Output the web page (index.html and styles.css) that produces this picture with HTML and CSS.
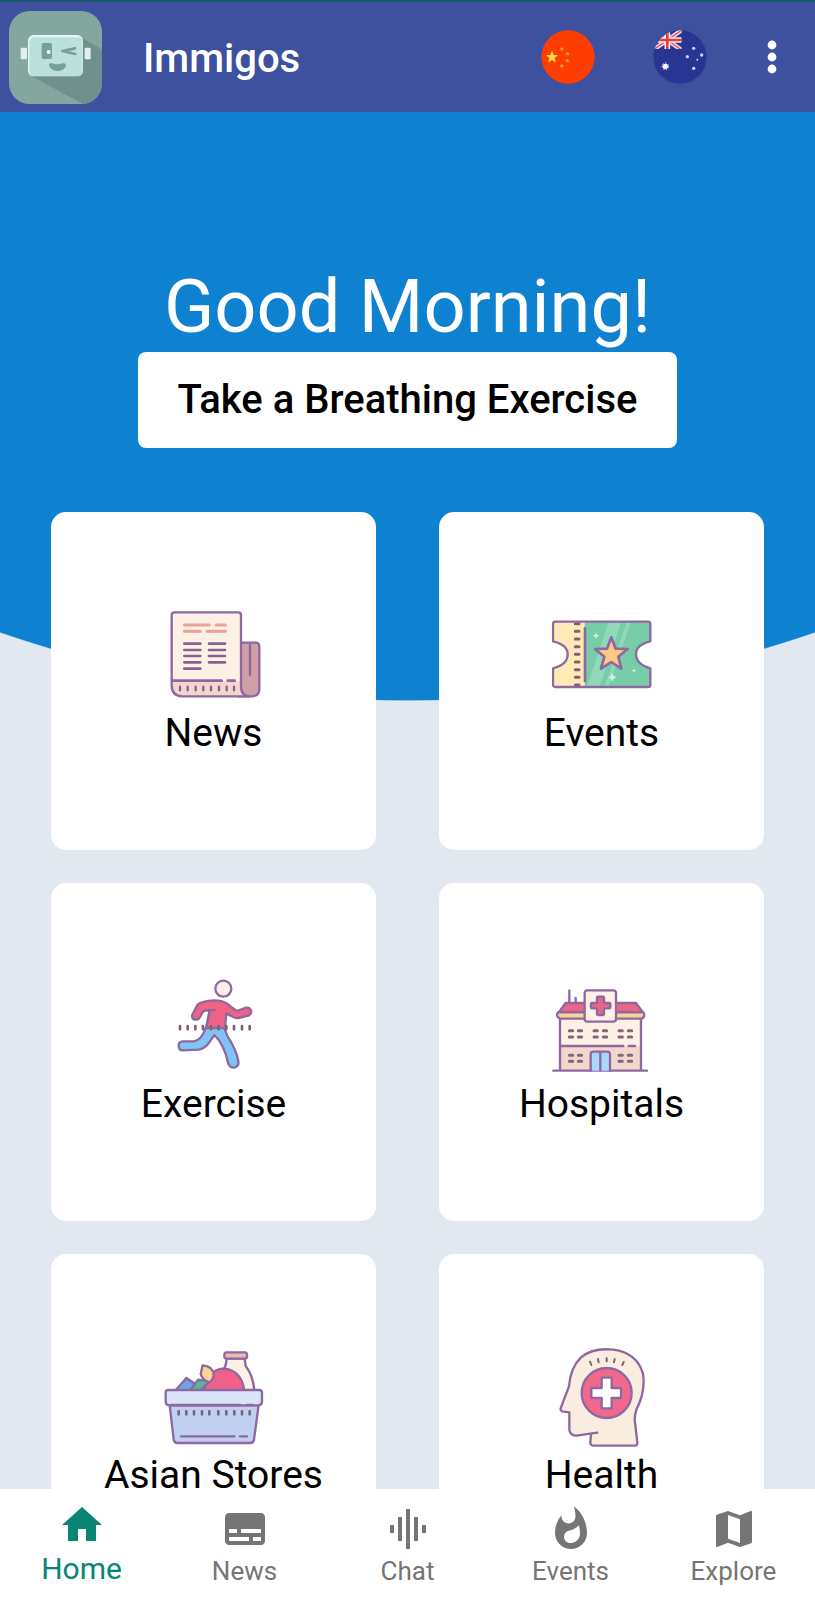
FILE: index.html
```html
<!DOCTYPE html>
<html lang="en">
<head>
<meta charset="utf-8">
<meta name="viewport" content="width=device-width, initial-scale=1">
<title>Immigos</title>
<link rel="stylesheet" href="styles.css">
</head>
<body>
<div class="app">
  <header class="topbar">
    <svg class="logo" viewBox="27 33 279 279" aria-hidden="true">
      <defs><clipPath id="logo-clip"><rect x="27" y="33" width="279" height="279" rx="62"/></clipPath></defs>
      <g clip-path="url(#logo-clip)">
        <rect x="27" y="33" width="279" height="279" fill="#83a69f"/>
        <path d="M246 113l60 36v163h-58L88 224z" fill="#70908d"/>
      </g>
      <rect x="62" y="143" width="19" height="35" rx="3" fill="#e0f1ef"/>
      <rect x="254" y="143" width="18" height="35" rx="3" fill="#e0f1ef"/>
      <rect x="84" y="105" width="165" height="124" rx="17" fill="#e2f8f4"/>
      <rect x="88" y="112" width="160" height="116" rx="14" fill="#bce0dc"/>
      <rect x="125" y="129" width="31" height="48" rx="5" fill="#75a09c"/>
      <circle cx="146" cy="156" r="6" fill="#e8fbf8"/>
      <path d="M225 145L187 153L226 162" fill="none" stroke="#75a09c" stroke-width="8" stroke-linejoin="round" stroke-linecap="round"/>
      <path d="M147 193q1-5 9-3q16 6 32 0q9-2 10 5q-1 17-25 18q-25-1-26-20z" fill="#75a09c"/>
    </svg>
    <h1 class="brand">Immigos</h1>
    <button class="flag" type="button" aria-label="Chinese">
      <svg viewBox="64 89 162 162" aria-hidden="true">
        <circle cx="145" cy="170" r="80" fill="#fe3d00"/>
        <path d="M97 150l5 14h14l-11 9 4 14-12-8-12 8 4-14-11-9h14z" fill="#ffd83a"/>
        <g fill="#ff9a1c"><path d="M127 139l2 4 5 1-4 3 1 5-4-3-5 3 1-5-3-4 5-1z"/><path d="M144 154l2 4 5 1-4 3 1 5-5-3-4 3 1-5-4-4 5-1z"/><path d="M143 174l2 4 5 1-4 3 1 5-4-3-5 3 1-5-3-4 5-1z"/><path d="M127 190l2 4 5 1-4 3 1 5-4-3-5 3 1-5-3-4 5-1z"/></g>
      </svg>
    </button>
    <button class="flag" type="button" aria-label="Australian English">
      <svg viewBox="399 89 162 162" aria-hidden="true">
        <defs>
          <clipPath id="au-clip"><circle cx="480" cy="170" r="80"/></clipPath>
          <clipPath id="au-canton"><rect x="399" y="89" width="86" height="57"/></clipPath>
        </defs>
        <g clip-path="url(#au-clip)">
          <rect x="399" y="89" width="162" height="162" fill="#283593"/>
          <g clip-path="url(#au-canton)">
            <path d="M395 152L487 88M397 88L489 152" stroke="#f3dfe6" stroke-width="13"/>
            <path d="M395 152L487 88M397 88L489 152" stroke="#e0525c" stroke-width="4"/>
            <path d="M442 85v61M395 119h90" stroke="#f8eef2" stroke-width="17"/>
            <path d="M442 85v61M395 119h90" stroke="#ea3b3f" stroke-width="8"/>
          </g>
        </g>
        <circle cx="436" cy="198" r="8" fill="#fff"/>
        <circle cx="436" cy="198" r="10" fill="none" stroke="#fff" stroke-width="3" stroke-dasharray="4 5"/>
        <g fill="#c5d3f5"><circle cx="521" cy="144" r="5"/><circle cx="502" cy="169" r="5"/><circle cx="545" cy="164" r="5"/><circle cx="521" cy="204" r="5"/><circle cx="532" cy="178" r="3"/></g>
      </svg>
    </button>
    <button class="more" type="button" aria-label="More options">
      <svg viewBox="0 0 10 34" aria-hidden="true"><g fill="#fff"><circle cx="5" cy="5" r="4.4"/><circle cx="5" cy="17" r="4.4"/><circle cx="5" cy="29" r="4.4"/></g></svg>
    </button>
  </header>

  <main class="content">
    <section class="hero">
      <h2 class="greeting">Good Morning!</h2>
      <button class="breathe" type="button">Take a Breathing Exercise</button>
    </section>

    <section class="cards" aria-label="Topics">
      <a class="card" href="#news">
        <svg class="art" viewBox="40 51 300 300" aria-hidden="true">
          <path d="M265 161h49q12 0 12 12v127q0 22-24 22h-37z" fill="#cf9fa5" stroke="#8e68a1" stroke-width="7"/>
          <path d="M298 164v94" stroke="#8e68a1" stroke-width="7" stroke-linecap="round"/>
          <path d="M63 276h205v24q2 22 22 22H94q-31-1-31-33z" fill="#f3d7ce"/>
          <path d="M63 78q0-8 8-8h192q8 0 8 8v198H63z" fill="#fdf1e5"/>
          <path d="M290 322H94q-31-1-31-33V78q0-8 8-8h192q8 0 8 8v211q0 33 27 33" fill="none" stroke="#8e68a1" stroke-width="7"/>
          <path d="M66 275h147M231 275h21" stroke="#8e68a1" stroke-width="8" stroke-linecap="round"/>
          <g stroke="#eaa29c" stroke-width="9" stroke-linecap="round"><path d="M101 108h75M197 108h27M101 127h48M169 127h55"/></g>
          <g stroke="#876193" stroke-width="8" stroke-linecap="round"><path d="M101 164h48M101 183h48M101 201h48M101 220h48M101 239h48M175 164h48M175 183h48M175 201h48M175 220h48"/></g>
          <path d="M88 293v11M111 293v11M135 293v11M158 293v11M181 293v11M205 293v11M228 293v11M250 293v11" stroke="#876193" stroke-width="7" stroke-linecap="round"/>
        </svg>
        <span class="card-label">News</span>
      </a>
      <a class="card" href="#events">
        <svg class="art" viewBox="64 51 300 300" aria-hidden="true">
          <defs><clipPath id="ticket-clip"><path id="ticket" d="M74 98H352q7 0 7 7V157Q316 167 316 196Q316 226 359 238V287q0 7-7 7H74q-7 0-7-7V238Q111 227 111 196Q111 167 67 157V105q0-7 7-7z"/></clipPath></defs>
          <g clip-path="url(#ticket-clip)">
            <path d="M60 90h102v210H60z" fill="#ffeab5"/>
            <path d="M162 90h205v210H162z" fill="#78cda9"/>
            <path d="M235 95h38L205 298h-38zM290 95h12L232 298h-12z" fill="#8fd8b8"/>
          </g>
          <path d="M163 118v158" stroke="#8e68a1" stroke-width="8" stroke-linecap="round"/>
          <path d="M134 104h11M134 127h11M134 150h11M134 173h11M134 196h11M134 219h11M134 242h11M134 265h11M134 288h11" stroke="#806079" stroke-width="9" stroke-linecap="round"/>
          <path d="M242 145l13 34 36 1-28 23 9 36-30-20-31 20 10-36-28-23 36-1z" fill="#fbc982" stroke="#8e68a1" stroke-width="8" stroke-linejoin="round"/>
          <path d="M196 130l3 7 7 3-7 3-3 7-3-7-7-3 7-3zM245 252l4 9 9 4-9 4-4 9-4-9-9-4 9-4zM310 238l2 5 5 2-5 2-2 5-2-5-5-2 5-2z" fill="#c9f5df"/>
          <use href="#ticket" fill="none" stroke="#8e68a1" stroke-width="7" stroke-linejoin="round"/>
        </svg>
        <span class="card-label">Events</span>
      </a>
      <a class="card" href="#exercise">
        <svg class="art" viewBox="40 51 300 300" aria-hidden="true">
          <g stroke="#8e68a1" stroke-width="7" stroke-linejoin="round">
            <path d="M166 203Q151 242 130 244H96Q84 245 84 257Q84 271 97 271L143 269Q163 266 176 247L191 225Q220 252 233 311Q238 324 250 323Q266 319 263 303Q256 267 231 230L220 203z" fill="#7fc4f5"/>
            <path d="M154 127Q179 119 205 122Q228 126 242 142L259 153L286 143Q299 142 302 154Q301 163 293 167L263 174Q256 175 248 171L227 161L223 204H166L177 151Q164 150 157 155L145 176Q137 182 127 176Q122 170 126 162L141 134Q146 128 154 127z" fill="#ee6285"/>
            <circle cx="218" cy="86" r="24" fill="#fdeee3"/>
          </g>
          <path d="M178 151l14-1" stroke="#8e68a1" stroke-width="7" stroke-linecap="round"/>
          <path d="M88 198v10M111 198v10M134 198v10M157 198v10M181 198v10M204 198v10M227 198v10M250 198v10M274 198v10M297 198v10" stroke="#806079" stroke-width="8" stroke-linecap="round"/>
        </svg>
        <span class="card-label">Exercise</span>
      </a>
      <a class="card" href="#hospitals">
        <svg class="art" viewBox="64 51 300 300" aria-hidden="true">
          <path d="M116 91v42M135 114v20" stroke="#8e68a1" stroke-width="7" stroke-linecap="round"/>
          <path d="M88 176h243v82H88z" fill="#fdf1e5"/>
          <path d="M88 258h243v74H88z" fill="#f3d7ca"/>
          <g stroke="#8e68a1" stroke-width="7" stroke-linejoin="round" stroke-linecap="round">
            <path d="M88 330V176M331 330V176M68 332h281" fill="none"/>
            <path d="M84 157L105 129H316L337 157z" fill="#ec6487"/>
            <path d="M82 157H338Q346 169 333 176H88Q74 169 82 157z" fill="#f9d295"/>
            <rect x="162" y="91" width="94" height="94" rx="8" fill="#fdf1e5"/>
            <path d="M202 110h15q3 0 3 3v16h16q3 0 3 3v10q0 3-3 3h-16v17q0 3-3 3h-15q-3 0-3-3v-17h-15q-3 0-3-3v-10q0-3 3-3h15v-16q0-3 3-3z" fill="#ec6487"/>
            <path d="M180 332v-49q0-8 8-8h42q8 0 8 8v49" fill="#a9d8fb"/>
            <path d="M209 276v55"/>
            <path d="M92 258h186M294 258h19"/>
          </g>
          <path d="M116 212h10M143 212h10M116 231h10M143 231h10M190 212h10M218 212h10M190 231h10M218 231h10M265 212h10M293 212h10M265 231h10M293 231h10M116 286h10M143 286h10M116 304h10M143 304h10M265 286h10M293 286h10M265 304h10M293 304h10" stroke="#86637f" stroke-width="9" stroke-linecap="round"/>
        </svg>
        <span class="card-label">Hospitals</span>
      </a>
      <a class="card" href="#stores">
        <svg class="art" viewBox="70 51 300 300" aria-hidden="true">
          <g stroke="#8e68a1" stroke-width="7" stroke-linejoin="round" stroke-linecap="round">
            <path d="M258 83Q257 105 244 126V178H341Q337 133 315 105L312 83z" fill="#fdf1e5"/>
            <rect x="251" y="64" width="68" height="19" rx="7" fill="#efb9ae"/>
            <path d="M190 178Q200 113 252 113Q302 119 311 178z" fill="#f0618a"/>
            <path d="M105 178L137 141L164 159L150 178z" fill="#6ba5e5"/>
            <path d="M148 178L172 146L207 151L180 178z" fill="#55b696"/>
            <path d="M186 103Q217 105 219 132Q217 148 206 154Q185 148 180 129z" fill="#fbd298"/>
            <path d="M87 222H354L340 326Q338 336 329 336H111Q101 336 99 326z" fill="#c1cff0"/>
            <path d="M82 177H356q8 0 8 8V211q0 12-12 12H87q-12 0-12-12V185q0-8 7-8z" fill="#dae5fa"/>
            <path d="M90 222h209M318 222h19M121 316h160M298 316h21"/>
          </g>
          <path d="M114 241v9M137 241v9M160 241v9M184 241v9M206 241v9M233 241v9M257 241v9M281 241v9M304 241v9M327 241v9" stroke="#806079" stroke-width="8" stroke-linecap="round"/>
        </svg>
        <span class="card-label">Asian Stores</span>
      </a>
      <a class="card" href="#health">
        <svg class="art" viewBox="64 51 300 300" aria-hidden="true">
          <path d="M181 344V311L138 314Q119 314 116 297V244L98 242Q87 240 91 229L115 166Q119 110 151 79Q187 49 248 56Q318 65 337 128Q345 182 318 234Q309 257 314 282L320 334Q321 344 312 344z" fill="#f9eddf"/>
          <path d="M200 305L138 314Q119 314 116 297V244L98 242Q87 240 91 229L115 166Q119 110 151 79Q187 49 248 56Q318 65 337 128Q345 182 318 234Q309 257 314 282L320 334Q321 344 312 344H190Q178 344 179 333L181 311" fill="none" stroke="#8e68a1" stroke-width="7" stroke-linecap="round" stroke-linejoin="round"/>
          <circle cx="228" cy="186" r="75" fill="#f0698c" stroke="#8e68a1" stroke-width="7"/>
          <path d="M213 140h30v31h28v30h-28v31h-30v-31h-31v-30h31z" fill="#fff" stroke="#8e68a1" stroke-width="7" stroke-linejoin="round"/>
          <path d="M178 92l4 10M202 84l2 10M228 81v10M252 84l-2 10M279 93l-4 9" stroke="#806079" stroke-width="6" stroke-linecap="round"/>
        </svg>
        <span class="card-label">Health</span>
      </a>
    </section>
  </main>

  <nav class="tabs" aria-label="Main">
    <a class="tab tab-active" href="#home" aria-current="page">
      <svg viewBox="0 0 24 24" aria-hidden="true"><path d="M10 20v-6h4v6h5v-8h3L12 3 2 12h3v8z"/></svg>
      <span>Home</span>
    </a>
    <a class="tab" href="#news">
      <svg viewBox="0 0 24 24" aria-hidden="true"><path d="M20 4H4c-1.100 0-2 .9-2 2v12c0 1.100.9 2 2 2h16c1.100 0 2-.9 2-2V6c0-1.100-.9-2-2-2zM4 12h4v2H4v-2zm10 6H4v-2h10v2zm6 0h-4v-2h4v2zm0-4H10v-2h10v2z"/></svg>
      <span>News</span>
    </a>
    <a class="tab" href="#chat">
      <svg viewBox="0 0 24 24" aria-hidden="true"><path d="M7 18h2V6H7v12zm4 4h2V2h-2v20zm-8-8h2v-4H3v4zm12 4h2V6h-2v12zm4-8v4h2v-4h-2z"/></svg>
      <span>Chat</span>
    </a>
    <a class="tab" href="#events">
      <svg viewBox="0 0 24 24" aria-hidden="true"><path d="M13.500.67s.74 2.650.74 4.800c0 2.060-1.350 3.730-3.410 3.730-2.070 0-3.630-1.670-3.630-3.730l.03-.36C5.210 7.510 4 10.620 4 14c0 4.420 3.580 8 8 8s8-3.580 8-8C20 8.610 17.410 3.800 13.500.67zM11.710 19c-1.780 0-3.220-1.400-3.220-3.140 0-1.620 1.050-2.760 2.810-3.120 1.770-.36 3.600-1.210 4.620-2.580.39 1.290.59 2.650.59 4.040 0 2.650-2.150 4.800-4.800 4.800z"/></svg>
      <span>Events</span>
    </a>
    <a class="tab" href="#explore">
      <svg viewBox="0 0 24 24" aria-hidden="true"><path d="M20.500 3l-.16.030L15 5.100 9 3 3.360 4.900c-.21.070-.36.250-.36.480V20.500c0 .28.220.5.500.5l.16-.030L9 18.900l6 2.100 5.640-1.900c.21-.070.36-.25.360-.48V3.500c0-.28-.22-.5-.5-.5zM15 19l-6-2.110V5l6 2.110V19z"/></svg>
      <span>Explore</span>
    </a>
  </nav>
</div>
</body>
</html>
```

FILE: styles.css
```css
* {
  box-sizing: border-box;
}

body {
  margin: 0;
  font-family: Roboto, "Liberation Sans", sans-serif;
}

button {
  border: 0;
  padding: 0;
  background: none;
  color: inherit;
  font: inherit;
  cursor: pointer;
}

a {
  color: inherit;
  text-decoration: none;
}

svg {
  display: block;
}

.app {
  display: flex;
  flex-direction: column;
  height: 100vh;
}

/* Top bar */
.topbar {
  display: flex;
  flex: none;
  align-items: center;
  height: 112px;
  padding: 0 19px 0 9px;
  border-top: 2px solid #15586f;
  background: #3d519e;
  color: #fff;
}

.logo {
  width: 93px;
  height: 93px;
}

.brand {
  flex: 1;
  margin: 0 0 0 41px;
  padding-top: 4px;
  font-size: 40px;
  font-weight: 500;
  line-height: 48px;
}

.flag {
  width: 54px;
  height: 54px;
  margin-right: 58px;
}

.flag + .more {
  margin-left: -17px;
}

.more {
  display: flex;
  align-items: center;
  justify-content: center;
  width: 48px;
  height: 48px;
}

.more svg {
  width: 10px;
  height: 34px;
}

/* Scrolling content over the curved backdrop */
.content {
  flex: 1;
  min-height: 0;
  overflow-y: auto;
  scrollbar-width: none;
  background: radial-gradient(ellipse 154% 1253px at 50% -664px, #0f81d1 99.9%, #e2e8ef 100%);
}

.hero {
  display: flex;
  flex-direction: column;
  align-items: center;
  padding: 150px 24px 64px;
  color: #fff;
}

.greeting {
  margin: 0;
  font-size: 74px;
  font-weight: 400;
  line-height: 90px;
}

.breathe {
  padding: 24px 40px;
  border-radius: 8px;
  background: #fff;
  color: #000;
  font-size: 40px;
  font-weight: 500;
  line-height: 48px;
}

.cards {
  display: grid;
  grid-template-columns: 1fr 1fr;
  gap: 33px 63px;
  padding: 0 51px 33px;
}

.card {
  display: flex;
  flex-direction: column;
  align-items: center;
  gap: 4px;
  padding: 94px 16px;
  border-radius: 15px;
  background: #fff;
  color: #000;
}

.art {
  width: 100px;
  height: 100px;
}

.card-label {
  font-size: 39px;
  line-height: 46px;
}

/* Bottom tabs */
.tabs {
  display: grid;
  flex: none;
  grid-template-columns: repeat(5, 1fr);
  height: 111px;
  background: #fff;
  color: #757575;
}

.tab {
  display: flex;
  flex-direction: column;
  align-items: center;
  gap: 2px;
  padding-top: 16px;
  font-size: 26px;
  line-height: 32px;
}

.tab svg {
  width: 48px;
  height: 48px;
  fill: currentColor;
}

.tab-active {
  gap: 4px;
  padding-top: 12px;
  color: #0a8574;
  font-size: 30px;
}
```
